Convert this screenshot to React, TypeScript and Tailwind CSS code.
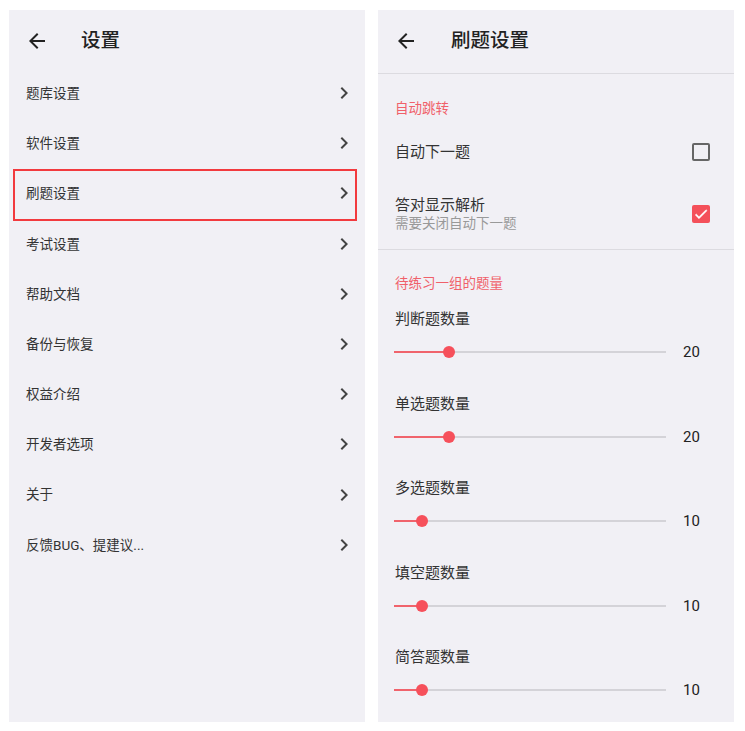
import React from "react";

const FONT = 'Roboto, "Noto Sans CJK SC", "Noto Sans", sans-serif';

function BackArrow() {
  return (
    <svg width="24" height="24" viewBox="0 0 24 24" className="shrink-0">
      <path d="M20 11H7.83l5.59-5.59L12 4l-8 8 8 8 1.41-1.41L7.83 13H20v-2z" fill="#222" />
    </svg>
  );
}

function Chevron() {
  return (
    <svg width="24" height="24" viewBox="0 0 24 24" className="shrink-0">
      <path d="M10 6L8.59 7.41 13.17 12l-4.58 4.59L10 18l6-6z" fill="#444" />
    </svg>
  );
}

const menu = [
  "题库设置",
  "软件设置",
  "刷题设置",
  "考试设置",
  "帮助文档",
  "备份与恢复",
  "权益介绍",
  "开发者选项",
  "关于",
  "反馈BUG、提建议...",
];

function Slider({ label, value }: { label: string; value: number }) {
  const pct = value / 100;
  return (
    <div className="h-[84.5px] shrink-0">
      <div className="h-[20px] leading-[20px] text-[15px] text-[#333]">{label}</div>
      <div className="mt-[13px] h-[20px] flex items-center">
        <div className="relative w-[272px] h-[20px] ml-[-1px]">
          <div className="absolute left-0 right-0 top-[9px] h-[2px] bg-[#d4d3d8]" />
          <div
            className="absolute left-0 top-[9px] h-[2px] bg-[#f0636c]"
            style={{ width: `${pct * 272 + 1}px` }}
          />
          <div
            className="absolute top-[4px] w-[12px] h-[12px] rounded-full bg-[#f6505b]"
            style={{ left: `${pct * 272 - 5}px` }}
          />
        </div>
        <div className="ml-[17px] text-[15px] text-[#222] leading-[20px]">{value}</div>
      </div>
    </div>
  );
}

export default function App() {
  return (
    <div className="w-[745px] h-[731px] bg-white flex" style={{ fontFamily: FONT }}>
      {/* Left panel */}
      <div className="mt-[10px] ml-[9px] w-[356px] h-[712px] bg-[#f1f0f5] flex flex-col overflow-hidden">
        <div className="h-[58px] pt-[3px] flex items-center pl-[16px] shrink-0">
          <BackArrow />
          <div className="ml-[32px] text-[19.5px] font-medium text-[#222]">设置</div>
        </div>
        {menu.map((m, i) => (
          <div key={m} className="relative h-[50.2px] shrink-0 flex items-center justify-between pl-[17px] pr-[9px]">
            <span className="text-[13.5px] text-[#333]">{m}</span>
            <Chevron />
            {i === 2 && (
              <div className="absolute left-[4px] right-[8px] top-[1px] bottom-[-2px] border-2 border-[#f23a3e]" />
            )}
          </div>
        ))}
      </div>

      {/* Right panel */}
      <div className="mt-[10px] ml-[13px] w-[356px] h-[712px] bg-[#f1f0f5] flex flex-col overflow-hidden">
        <div className="h-[63px] pb-[2px] flex items-center pl-[16px] shrink-0">
          <BackArrow />
          <div className="ml-[33px] text-[19.5px] font-medium text-[#222]">刷题设置</div>
        </div>
        <div className="h-px bg-[#dcdbe0] shrink-0" />

        <div className="pl-[17px] pr-[24px] flex flex-col">
          <div className="h-[48px] pt-[24px] leading-[20px] text-[13.5px] text-[#f0606a] shrink-0">自动跳转</div>
          <div className="h-[60px] flex items-center justify-between shrink-0">
            <span className="text-[15px] text-[#333]">自动下一题</span>
            <div className="w-[18px] h-[18px] rounded-[2px] border-2 border-[#666]" />
          </div>
          <div className="h-[67px] pt-[13px] shrink-0">
            <div className="flex items-center justify-between">
              <div className="flex flex-col">
                <span className="h-[20px] leading-[20px] text-[15px] text-[#333]">答对显示解析</span>
                <span className="h-[17px] leading-[17px] text-[13.5px] text-[#999]">需要关闭自动下一题</span>
              </div>
              <div className="w-[18px] h-[18px] rounded-[2px] bg-[#f4505a] flex items-center justify-center">
                <svg width="16" height="16" viewBox="0 0 24 24">
                  <path d="M9 16.17L4.83 12l-1.42 1.41L9 19 21 7l-1.41-1.41z" fill="#fff" stroke="#fff" strokeWidth="0.8" />
                </svg>
              </div>
            </div>
          </div>
        </div>
        <div className="h-px bg-[#dcdbe0] shrink-0" />

        <div className="pl-[17px] pr-[24px] flex flex-col">
          <div className="h-[43px] pt-[23px] leading-[20px] text-[13.5px] text-[#f0606a] shrink-0">待练习一组的题量</div>
          <div className="h-[16px] shrink-0" />
          <Slider label="判断题数量" value={20} />
          <Slider label="单选题数量" value={20} />
          <Slider label="多选题数量" value={10} />
          <Slider label="填空题数量" value={10} />
          <Slider label="简答题数量" value={10} />
        </div>
      </div>
    </div>
  );
}
